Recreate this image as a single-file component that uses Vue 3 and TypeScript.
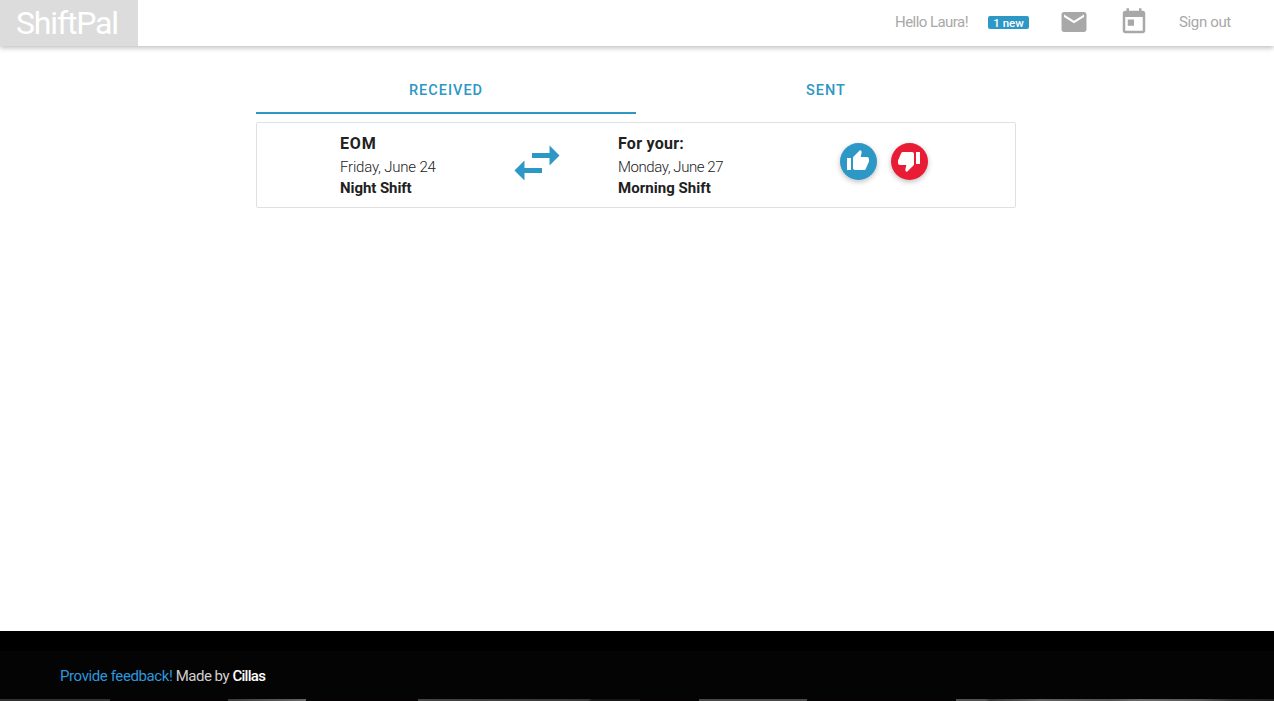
<script setup lang="ts">
import { ref } from 'vue'

interface ShiftInfo {
  title: string
  date: string
  shift: string
}

const tabs: string[] = ['Received', 'Sent']
const activeTab = ref(0)
const offered: ShiftInfo = { title: 'EOM', date: 'Friday, June 24', shift: 'Night Shift' }
const wanted: ShiftInfo = { title: 'For your:', date: 'Monday, June 27', shift: 'Morning Shift' }
</script>

<template>
  <div class="page">
    <header class="bar">
      <a class="brand"><span>ShiftPal</span></a>
      <nav class="nav">
        <span class="hello">Hello Laura!</span>
        <span class="badge">1 new</span>
        <svg class="mail" viewBox="0 0 24 24"><path d="M20 4H4c-1.100 0-1.990.9-1.990 2L2 18c0 1.100.9 2 2 2h16c1.100 0 2-.9 2-2V6c0-1.100-.9-2-2-2zm0 4l-8 5-8-5V6l8 5 8-5v2z" /></svg>
        <svg class="cal" viewBox="0 0 24 24"><path d="M19 3h-1V1h-2v2H8V1H6v2H5c-1.110 0-1.990.9-1.990 2L3 19c0 1.100.89 2 2 2h14c1.100 0 2-.9 2-2V5c0-1.100-.9-2-2-2zm0 16H5V8h14v11zM7 10h5v5H7z" /></svg>
        <span class="signout">Sign out</span>
      </nav>
    </header>

    <main class="content">
      <div class="tabs">
        <button
          v-for="(tab, i) in tabs"
          :key="tab"
          class="tab"
          :class="{ active: activeTab === i }"
          @click="activeTab = i"
        >{{ tab }}</button>
      </div>

      <section class="card">
        <div class="shift offered">
          <strong class="title eom">{{ offered.title }}</strong>
          <span class="date">{{ offered.date }}</span>
          <strong class="name">{{ offered.shift }}</strong>
        </div>
        <svg class="swap" viewBox="0 0 24 24"><path d="M6.990 11L3 15l3.990 4v-3H14v-2H6.990v-3zM21 9l-3.990-4v3H10v2h7.010v3L21 9z" /></svg>
        <div class="shift wanted">
          <strong class="title">{{ wanted.title }}</strong>
          <span class="date monday">{{ wanted.date }}</span>
          <strong class="name morning">{{ wanted.shift }}</strong>
        </div>
        <div class="actions">
          <button class="round accept" aria-label="Accept">
            <svg viewBox="0 0 24 24"><path d="M1 21h4V9H1v12zm22-11c0-1.100-.9-2-2-2h-6.310l.95-4.570.03-.32c0-.41-.17-.79-.44-1.060L14.170 1 7.590 7.590C7.220 7.950 7 8.450 7 9v10c0 1.100.9 2 2 2h9c.83 0 1.540-.5 1.840-1.220l3.020-7.050c.09-.23.14-.47.14-.73v-2z" /></svg>
          </button>
          <button class="round reject" aria-label="Decline">
            <svg viewBox="0 0 24 24"><path d="M15 3H6c-.83 0-1.540.5-1.840 1.220l-3.020 7.050c-.09.23-.14.47-.14.73v2c0 1.100.9 2 2 2h6.310l-.95 4.570-.03.32c0 .41.17.79.44 1.060L9.830 23l6.590-6.590c.36-.36.58-.86.58-1.410V5c0-1.100-.9-2-2-2zm4 0v12h4V3h-4z" /></svg>
          </button>
        </div>
      </section>
    </main>

    <footer class="footer">
      <div class="footer-pad"></div>
      <div class="credits">
        <p><a class="feedback">Provide feedback!</a> <span class="made">Made by</span> <a class="author">Cillas</a></p>
      </div>
      <div class="texture"></div>
    </footer>
  </div>
</template>

<style>
body {
  margin: 0;
  background: #fff;
  overflow: hidden;
}
</style>

<style scoped>
.page {
  height: 701px;
  display: flex;
  flex-direction: column;
  font-family: Roboto, "Liberation Sans", sans-serif;
  color: #212121;
}
.bar {
  height: 46px;
  flex: none;
  display: flex;
  justify-content: space-between;
  box-shadow: 0 2px 5px 0 rgba(0, 0, 0, 0.2), 0 1px 6px 0 rgba(0, 0, 0, 0.08);
}
.brand {
  width: 138px;
  box-sizing: border-box;
  padding-left: 16px;
  background: #dcdcdc;
  color: #fff;
  font-size: 32px;
  font-weight: 400;
  line-height: 46px;
  letter-spacing: -1.150px;
  white-space: nowrap;
}
.nav {
  display: flex;
  align-items: flex-start;
  width: 379px;
  color: #a8a8a8;
  white-space: nowrap;
}
.hello, .signout {
  font-size: 15px;
  line-height: 44px;
}
.hello {
  width: 93px;
  letter-spacing: -0.550px;
}
.signout {
  margin-left: 30px;
  letter-spacing: -0.350px;
}
.badge {
  width: 41px;
  height: 13px;
  margin-top: 16px;
  border-radius: 2px;
  background: #2d97c6;
  color: #fff;
  font-size: 11.5px;
  line-height: 14px;
  font-weight: 500;
  text-align: center;
}
.mail, .cal {
  width: 30px;
  height: 30px;
  margin-top: 7px;
  fill: #a8a8a8;
}
.mail { margin-left: 30px; }
.cal { margin-left: 30px; }
.content {
  width: 760px;
  margin-left: 256px;
  padding-top: 20px;
  flex: 1;
}
.tabs {
  display: flex;
  height: 48px;
}
.tab {
  flex: 1;
  padding: 4px 0 0;
  border: 0;
  border-bottom: 2px solid transparent;
  background: none;
  color: #2d97c6;
  font: 500 14.500px/20px Roboto, sans-serif;
  letter-spacing: 1px;
  text-transform: uppercase;
}
.tab.active { border-bottom-color: #2d97c6; }
.card {
  box-sizing: border-box;
  height: 86px;
  margin-top: 8px;
  border: 1px solid #e0e0e0;
  border-radius: 2px;
  display: flex;
  align-items: flex-start;
}
.shift {
  display: flex;
  flex-direction: column;
  align-items: flex-start;
  padding-top: 9px;
  white-space: nowrap;
}
.offered {
  margin-left: 83px;
  width: 166.500px;
}
.wanted {
  margin-left: 51.500px;
  width: 222px;
}
.title {
  font-size: 16px;
  line-height: 24px;
  font-weight: 700;
  letter-spacing: 0.250px;
}
.eom { letter-spacing: 0.800px; }
.date {
  font-size: 15px;
  line-height: 22px;
  font-weight: 300;
  letter-spacing: -0.200px;
}
.monday { letter-spacing: -0.430px; }
.name {
  font-size: 15px;
  line-height: 21px;
  font-weight: 700;
  letter-spacing: -0.070px;
}
.morning { letter-spacing: 0.050px; }
.swap {
  width: 60px;
  height: 60px;
  margin-top: 10px;
  fill: #2d97c6;
}
.actions {
  display: flex;
  gap: 14px;
  margin-top: 20px;
}
.round {
  width: 37px;
  height: 37px;
  padding: 0 1px 1px 0;
  border: 0;
  border-radius: 50%;
  display: flex;
  align-items: center;
  justify-content: center;
  box-shadow: 0 2px 5px 0 rgba(0, 0, 0, 0.2), 0 2px 8px 0 rgba(0, 0, 0, 0.06);
}
.round svg {
  width: 24px;
  height: 24px;
  fill: #fff;
}
.accept { background: #2d97c6; }
.reject { background: #e91c35; }
.footer {
  height: 70px;
  flex: none;
  display: flex;
  flex-direction: column;
  background: #000;
}
.footer-pad { height: 20px; }
.credits {
  flex: 1;
  padding-left: 60px;
  background: #040404;
}
.credits p {
  margin: 0;
  font-size: 15px;
  line-height: 50px;
  height: 48px;
  white-space: nowrap;
  letter-spacing: -0.400px;
}
.feedback { color: #2d97dc; }
.made { color: #d0d0d0; letter-spacing: -0.500px; }
.author { color: #fff; font-weight: 500; letter-spacing: -0.700px; }
.texture {
  height: 2px;
  background: linear-gradient(90deg, #303030 0 110px, #060405 110px 228px, #3a3a3a 228px, #656565 306px, #060405 306px 418px, #444 418px, #363636 588px, #171717 592px 640px, #060405 640px 699px, #484848 699px 807px, #060405 807px 956px, #505050 956px 985px, #333 990px, #606060 1040px, #505050 1110px, #686868 1140px, #555 1200px, #303030 1230px, #202020 1274px);
}
</style>
